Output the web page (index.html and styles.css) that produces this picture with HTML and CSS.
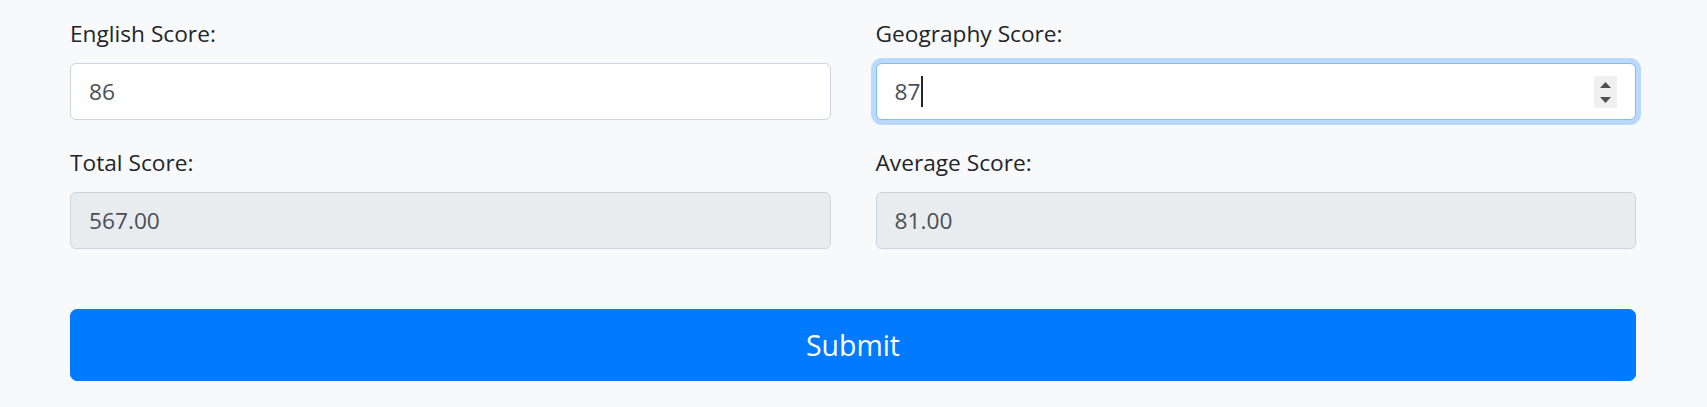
FILE: index.html
```html
<!DOCTYPE html>
<html lang="en">
<head>
<meta charset="utf-8">
<title>Scores</title>
<link rel="stylesheet" href="styles.css">
</head>
<body>
<form class="score-form">
  <div class="grid">
    <div class="field">
      <label class="label" for="english">English Score:</label>
      <input class="control" id="english" type="number" value="86">
    </div>
    <div class="field">
      <label class="label">Geography Score:</label>
      <div class="control focused">
        <span class="value">87</span><span class="caret"></span>
        <span class="spinner">
          <svg width="23" height="32" viewBox="0 0 23 32">
            <rect width="23" height="32" fill="#f0f0f0"/>
            <polygon points="6,12 11.5,6 17,12" fill="#505050"/>
            <polygon points="6,21 17,21 11.5,27" fill="#505050"/>
          </svg>
        </span>
      </div>
    </div>
    <div class="field">
      <label class="label" for="total">Total Score:</label>
      <input class="control readonly" id="total" type="text" value="567.00" readonly>
    </div>
    <div class="field">
      <label class="label" for="average">Average Score:</label>
      <input class="control readonly" id="average" type="text" value="81.00" readonly>
    </div>
  </div>
  <button class="submit" type="button">Submit</button>
</form>
</body>
</html>
```

FILE: styles.css
```css
html, body {
  margin: 0;
  padding: 0;
  background: #f8f9fa;
}
body {
  font-family: "Segoe UI", "Open Sans", "Noto Sans", Arial, sans-serif;
  color: #212529;
  font-size: 22.7px;
  line-height: 36px;
}
.score-form {
  padding: 15px 71px 0 70px;
  display: flex;
  flex-direction: column;
}
.grid {
  display: grid;
  grid-template-columns: 1fr 1fr;
  column-gap: 45px;
  row-gap: 24px;
}
.field {
  display: flex;
  flex-direction: column;
}
.label {
  display: block;
  box-sizing: border-box;
  padding-top: 1px;
  margin-bottom: 11px;
  height: 37px;
}
.control {
  box-sizing: border-box;
  height: 57px;
  width: 100%;
  margin: 0;
  padding: 0 18px;
  border: 1px solid #ced4da;
  border-radius: 6px;
  background: #fff;
  color: #495057;
  font: inherit;
  font-size: 22.7px;
  outline: none;
  -moz-appearance: textfield;
}
.control::-webkit-inner-spin-button,
.control::-webkit-outer-spin-button {
  -webkit-appearance: none;
  margin: 0;
}
div.control {
  display: flex;
  align-items: center;
}
.focused {
  border-color: #80bdff;
  box-shadow: 0 0 0 5px rgba(0, 123, 255, 0.25);
}
.caret {
  display: inline-block;
  width: 1.5px;
  height: 31px;
  background: #212529;
  margin-left: 1px;
}
.spinner {
  margin-left: auto;
  display: flex;
}
.readonly {
  background: #e9ecef;
}
.submit {
  margin-top: 60px;
  height: 72px;
  border: 1px solid #007bff;
  border-radius: 7px;
  background: #007bff;
  color: #fff;
  font: inherit;
  font-size: 28.4px;
  line-height: 45px;
  padding: 0;
  cursor: pointer;
}
```
